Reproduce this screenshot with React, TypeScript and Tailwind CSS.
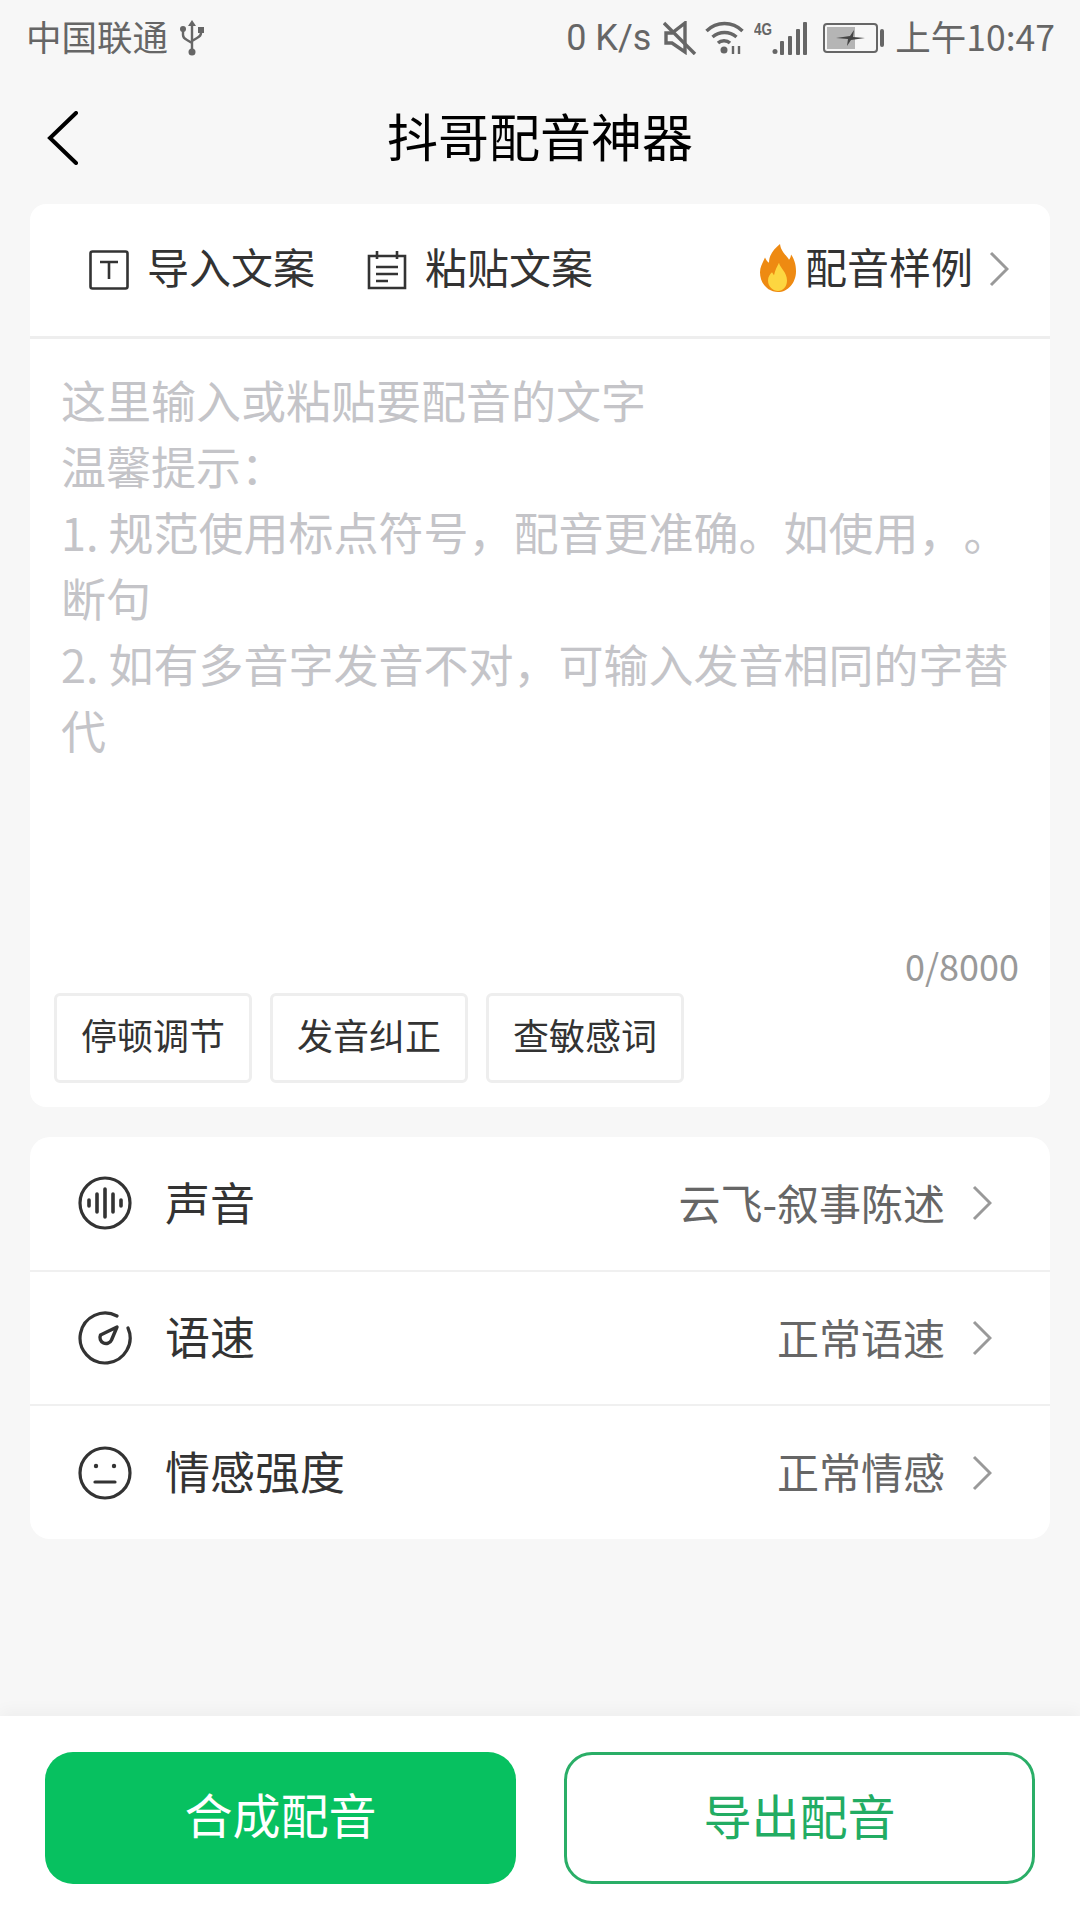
const font = 'font-["Noto_Sans_CJK_SC","Noto_Sans",sans-serif]'

const tags = ['停顿调节', '发音纠正', '查敏感词']

const UsbIcon = () => (
  <svg width="24" height="36" viewBox="0 0 24 36" fill="none" stroke="#666" strokeWidth="2.4">
    <path d="M12 5v27M3 10v5c0 3 2 4 4 5l5 3M21 10v3c0 3-2 4-4 5l-5 3" />
    <path d="M12 0l4 6H8z" fill="#666" stroke="none" />
    <circle cx="3" cy="9" r="3" fill="#666" stroke="none" />
    <rect x="18" y="7" width="6" height="6" fill="#666" stroke="none" />
    <circle cx="12" cy="32" r="3.5" fill="#666" stroke="none" />
  </svg>
)

const MuteIcon = () => (
  <svg width="34" height="34" viewBox="0 0 34 34" fill="none" stroke="#666" strokeWidth="3.4">
    <path d="M3 12v10h6l13 9V2L9 12z" />
    <path d="M1 2l31 31" />
  </svg>
)

const WifiIcon = () => (
  <svg width="39" height="33" viewBox="0 0 39 33" fill="none" stroke="#666" strokeWidth="3.4">
    <path d="M1.5 10c10-10 26-10 36 0M7.5 16c7-6 17-6 24 0M13 22c3-3 9-3 12 0" />
    <circle cx="19" cy="29" r="3.5" fill="#666" stroke="none" />
    <path d="M28 33v-8M34 33v-8" strokeWidth="2.4" />
  </svg>
)

const SignalIcon = () => (
  <svg width="53" height="34" viewBox="0 0 53 34">
    <text x="0" y="14" fontSize="16" fontWeight="700" fill="#666" fontFamily="Liberation Sans" textLength="18" lengthAdjust="spacingAndGlyphs">4G</text>
    <circle cx="21" cy="30.500" r="2.500" fill="#666" />
    <rect x="26" y="20" width="4" height="14" rx="1" fill="#666" />
    <rect x="34" y="15" width="4" height="19" rx="1" fill="#666" />
    <rect x="42" y="8" width="4" height="26" rx="1" fill="#666" />
    <rect x="49" y="1" width="4" height="33" rx="1" fill="#666" />
  </svg>
)

const BatteryIcon = () => (
  <svg width="61" height="30" viewBox="0 0 61 30">
    <rect x="1" y="1" width="53" height="28" rx="3" fill="none" stroke="#666" strokeWidth="2" />
    <rect x="4" y="4" width="28" height="22" fill="#b5b5b5" />
    <path d="M13 15l14-2 4-6-1 7 12 1-14 2-4 6 1-7z" fill="#444" />
    <rect x="57" y="6" width="4" height="18" rx="2" fill="#666" />
  </svg>
)

const FlameIcon = () => (
  <svg width="36" height="48" viewBox="0 0 36 46" preserveAspectRatio="none">
    <path d="M20 0c1 8 7 11 9 15 1-1 2-3 2-5 3 4 5 9 5 16 0 11-8 20-18 20S0 38 0 27c0-6 3-9 5-14 1 2 2 4 4 5 0-8 5-13 11-18z" fill="#ee8a12" />
    <path d="M19 18c1 5 8 9 8 17 0 6-4 10-9 10s-10-4-10-10c0-4 2-6 4-8l2 3c1-5 3-8 5-12z" fill="#fdd640" />
  </svg>
)

const ImportIcon = () => (
  <svg width="40" height="40" viewBox="0 0 40 40" fill="none" stroke="#333" strokeWidth="2.6">
    <rect x="1.5" y="1.5" width="37" height="37" rx="2" />
    <path d="M11 12h18M20 12v17" />
  </svg>
)

const PasteIcon = () => (
  <svg width="40" height="40" viewBox="0 0 40 40" fill="none" stroke="#333" strokeWidth="2.6">
    <path d="M2 6h36v32H2zM10 1v8M30 1v8M9 17h22M9 24h22M9 31h12" />
  </svg>
)

const VoiceIcon = () => (
  <svg width="54" height="54" viewBox="0 0 54 54" fill="none" stroke="#333" strokeWidth="3.2" strokeLinecap="round">
    <circle cx="27" cy="27" r="25" />
    <path d="M11 24v6M19 18v18M27 13v28M35 18v18M43 24v6" strokeWidth="3.6" />
  </svg>
)

const SpeedIcon = () => (
  <svg width="54" height="54" viewBox="0 0 54 54" fill="none" stroke="#333" strokeWidth="3.2" strokeLinecap="round" strokeLinejoin="round">
    <path d="M39 5A25 25 0 1 0 50 17" />
    <path d="M39 16L33.500 29a6 6 0 0 1-11-5z" strokeWidth="3.4" />
  </svg>
)

const FaceIcon = () => (
  <svg width="54" height="54" viewBox="0 0 54 54" fill="none" stroke="#333" strokeWidth="3.2" strokeLinecap="round">
    <circle cx="27" cy="27" r="25" />
    <circle cx="18" cy="20" r="2.200" fill="#333" stroke="none" />
    <circle cx="36" cy="20" r="2.200" fill="#333" stroke="none" />
    <path d="M17 36h20" />
  </svg>
)

const Chevron = () => (
  <svg width="20" height="36" viewBox="0 0 20 36" fill="none" stroke="#999" strokeWidth="3">
    <path d="M2 2l16 16L2 34" />
  </svg>
)

const rows = [
  { icon: <VoiceIcon />, label: '声音', value: '云飞-叙事陈述' },
  { icon: <SpeedIcon />, label: '语速', value: '正常语速' },
  { icon: <FaceIcon />, label: '情感强度', value: '正常情感' }
]

export default function App() {
  return (
    <div className={`${font} flex h-[1920px] w-[1080px] flex-col overflow-hidden bg-[#f7f7f7]`}>
      <div className="flex h-[75px] items-center justify-between pl-[26px] pr-[25px] text-[35.5px] text-[#666]">
        <div className="flex items-center gap-[12px]">
          <span className="pb-[3px]">中国联通</span>
          <UsbIcon />
        </div>
        <div className="flex items-center">
          <span className="font-['Roboto',sans-serif] text-[36px]">0 K/s</span>
          <div className="ml-[12px]"><MuteIcon /></div>
          <div className="ml-[8px]"><WifiIcon /></div>
          <div className="ml-[10px]"><SignalIcon /></div>
          <div className="ml-[16px]"><BatteryIcon /></div>
          <span className="ml-[11px] pb-[3px]">上午10:47</span>
        </div>
      </div>

      <div className="grid h-[129px] grid-cols-[1fr_auto_1fr] items-center text-[51px] leading-none text-black">
        <svg className="mb-[4px] ml-[47px]" width="32" height="54" viewBox="0 0 32 54" fill="none" stroke="#000" strokeWidth="4" strokeLinecap="round">
          <path d="M29 2L3 27l26 25" />
        </svg>
        <span className="pb-[8px]">抖哥配音神器</span>
      </div>

      <div className="mx-[30px] flex h-[903px] flex-col rounded-[16px] bg-white">
        <div className="flex h-[135px] shrink-0 items-center border-b-[3px] border-[#eeeeee] pl-[59px] pr-[41px] text-[42px] text-[#333]">
          <div className="flex items-center gap-[18px]">
            <ImportIcon />
            <span className="pb-[9px]">导入文案</span>
          </div>
          <div className="ml-[52px] flex items-center gap-[18px]">
            <PasteIcon />
            <span className="pb-[9px]">粘贴文案</span>
          </div>
          <div className="ml-auto flex items-center">
            <div className="mb-[4px]"><FlameIcon /></div>
            <span className="ml-[9px] pb-[9px]">配音样例</span>
            <div className="ml-[16px] mb-[2px]"><Chevron /></div>
          </div>
        </div>

        <div className="flex flex-1 flex-col px-[31px] pt-[28px]">
          <p className="h-[576px] text-[45px] leading-[66px] text-[#c4c4c8] [text-spacing-trim:space-all]">
            这里输入或粘贴要配音的文字
            <br />
            温馨提示：
            <br />
            1. 规范使用标点符号，配音更准确。如使用，。断句
            <br />
            2. 如有多音字发音不对，可输入发音相同的字替代
          </p>
          <div className="text-right text-[36px] leading-[44px] text-[#999]">0/8000</div>
        </div>

        <div className="flex gap-[18px] pb-[24px] pl-[24px]">
          {tags.map((tag) => (
            <div
              key={tag}
              className="flex h-[90px] w-[198px] items-center justify-center rounded-[6px] border-[3px] border-[#eeeeee] pb-[8px] text-[36px] text-[#333]"
            >
              {tag}
            </div>
          ))}
        </div>
      </div>

      <div className="mx-[30px] mt-[30px] flex h-[402px] flex-col rounded-[20px] bg-white">
        {rows.map((row, i) => (
          <div
            key={row.label}
            className={`flex flex-1 items-center pl-[48px] pr-[58px] ${i > 0 ? 'border-t-2 border-[#f0f0f0]' : ''}`}
          >
            {row.icon}
            <span className="ml-[33px] pb-[4px] text-[45px] text-[#333]">{row.label}</span>
            <span className="ml-auto pb-[4px] text-[42px] text-[#666]">{row.value}</span>
            <div className="ml-[27px]"><Chevron /></div>
          </div>
        ))}
      </div>

      <div className="mt-auto flex h-[204px] justify-between bg-white px-[45px] pt-[36px] text-[48px] shadow-[0_-6px_14px_rgba(0,0,0,0.035)]">
        <div className="flex h-[132px] w-[471px] items-center justify-center rounded-[28px] bg-[#07c160] pb-[10px] text-white">
          合成配音
        </div>
        <div className="flex h-[132px] w-[471px] items-center justify-center rounded-[28px] border-[3px] border-[#2aae67] pb-[8px] text-[#22ac63]">
          导出配音
        </div>
      </div>
    </div>
  )
}
